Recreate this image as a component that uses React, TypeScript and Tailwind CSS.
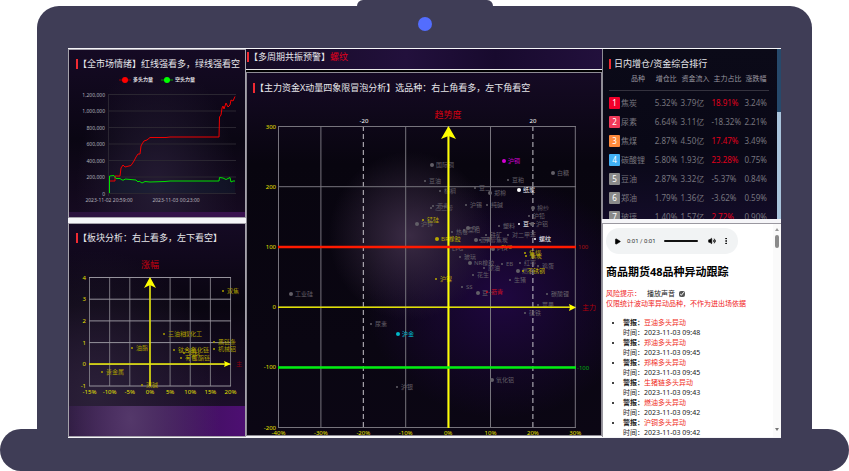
import type { ReactNode } from 'react';
import { Play, Volume2, EllipsisVertical } from 'lucide-react';

type Point = { x: number; y: number; name: string; r?: number; color?: string };

const GRAY = '#625f67';
const YELLOW = '#b8a800';

const ranking = [
  { name: '焦炭', badge: 'bg-[#f4002b]', add: '5.32%', flow: '3.79亿', main: '18.91%', change: '3.24%' },
  { name: '尿素', badge: 'bg-[#f03a5a]', add: '6.64%', flow: '3.11亿', main: '-18.32%', change: '2.21%' },
  { name: '焦煤', badge: 'bg-[#ff8a3c]', add: '2.87%', flow: '4.50亿', main: '17.47%', change: '3.49%' },
  { name: '碳酸锂', badge: 'bg-[#41b0f5]', add: '5.80%', flow: '1.93亿', main: '23.28%', change: '0.75%' },
  { name: '豆油', badge: 'bg-[#8a8a8a]', add: '2.87%', flow: '3.32亿', main: '-5.37%', change: '0.84%' },
  { name: '郑油', badge: 'bg-[#8a8a8a]', add: '1.79%', flow: '1.36亿', main: '-3.62%', change: '0.59%' },
  { name: '玻璃', badge: 'bg-[#8a8a8a]', add: '1.40%', flow: '1.57亿', main: '2.72%', change: '0.90%' },
];

const alerts = [
  { text: '豆油多头异动', time: '2023-11-03 09:48' },
  { text: '郑油多头异动', time: '2023-11-03 09:45' },
  { text: '郑棉多头异动', time: '2023-11-03 09:45' },
  { text: '生猪链多头异动', time: '2023-11-03 09:43' },
  { text: '燃油多头异动', time: '2023-11-03 09:42' },
  { text: '沪铜多头异动', time: '2023-11-03 09:42' },
];

const sectorPoints: Point[] = [
  { x: 223, y: 291, name: '双焦' },
  { x: 164, y: 334, name: '三油粕' },
  { x: 180, y: 334, name: '煤化工', r: 0 },
  { x: 132, y: 348, name: '油脂' },
  { x: 174, y: 350, name: '钛合金' },
  { x: 187, y: 350, name: '氧化链' },
  { x: 184, y: 353, name: '饲料' },
  { x: 181, y: 358, name: '有色' },
  { x: 188, y: 358, name: '聚酯链' },
  { x: 214, y: 342, name: '黑链条' },
  { x: 214, y: 349, name: '机械铝' },
  { x: 102, y: 372, name: '贵金属' },
  { x: 142, y: 385, name: '双碱' },
];

const bubblePoints: Point[] = [
  { x: 432, y: 165, name: '国际铜', r: 2 },
  { x: 425, y: 181, name: '豆油' },
  { x: 440, y: 191, name: '棕榈' },
  { x: 475, y: 188, name: '豆二' },
  { x: 490, y: 193, name: '郑棉', r: 2 },
  { x: 508, y: 180, name: '豆粕' },
  { x: 519, y: 190, name: '纸浆', r: 2, color: '#ffffff' },
  { x: 553, y: 173, name: '白糖', r: 2 },
  { x: 504, y: 161, name: '沪铜', r: 2, color: '#d400d4' },
  { x: 466, y: 205, name: '沪锡' },
  { x: 487, y: 205, name: '纯碱' },
  { x: 533, y: 208, name: '棉纱', r: 2 },
  { x: 529, y: 216, name: '沪铅' },
  { x: 433, y: 206, name: '沥青' },
  { x: 431, y: 208, name: '乙二醇' },
  { x: 423, y: 220, name: '锰硅', color: YELLOW },
  { x: 417, y: 224, name: '沪锌', r: 2 },
  { x: 499, y: 226, name: '塑料' },
  { x: 519, y: 224, name: '豆一', color: '#ffffff' },
  { x: 532, y: 224, name: '沪铝', r: 2 },
  { x: 452, y: 232, name: '热卷' },
  { x: 468, y: 228, name: 'PP', r: 2 },
  { x: 464, y: 230, name: '菜粕' },
  { x: 486, y: 235, name: '铁矿' },
  { x: 508, y: 235, name: '对二甲苯' },
  { x: 437, y: 239, name: 'BR橡胶', r: 2, color: YELLOW },
  { x: 476, y: 240, name: '沥青', r: 2 },
  { x: 480, y: 240, name: '甲醇焦炭' },
  { x: 535, y: 239, name: '螺纹', color: '#ffffff' },
  { x: 497, y: 247, name: 'PVC', color: YELLOW },
  { x: 493, y: 249, name: 'PTA', r: 2 },
  { x: 448, y: 249, name: 'LPG' },
  { x: 460, y: 257, name: '玻璃' },
  { x: 470, y: 263, name: 'NR橡胶', r: 2 },
  { x: 502, y: 264, name: 'EB' },
  { x: 484, y: 268, name: '原油' },
  { x: 473, y: 275, name: '花生' },
  { x: 510, y: 280, name: '生猪' },
  { x: 520, y: 263, name: '红枣' },
  { x: 538, y: 266, name: '鸡蛋' },
  { x: 525, y: 253, name: '焦煤', color: YELLOW },
  { x: 526, y: 256, name: '焦炭', color: YELLOW },
  { x: 518, y: 271, name: '燃油', r: 2 },
  { x: 523, y: 271, name: '不锈钢', color: YELLOW },
  { x: 436, y: 279, name: '沪镍', color: YELLOW },
  { x: 462, y: 287, name: 'SS' },
  { x: 478, y: 293, name: '豆一', r: 2 },
  { x: 487, y: 292, name: '沥青', color: '#d01020' },
  { x: 547, y: 294, name: '碳酸锂' },
  { x: 538, y: 305, name: '苹果' },
  { x: 525, y: 313, name: '硅铁' },
  { x: 291, y: 294, name: '工业硅', r: 2 },
  { x: 371, y: 324, name: '尿素' },
  { x: 398, y: 334, name: '沪金', r: 2, color: '#00b8c8' },
  { x: 397, y: 387, name: '沪银' },
  { x: 492, y: 380, name: '氧化铝', r: 2 },
];

function PanelTitle({ children }: { children: ReactNode }) {
  return (
    <h2 className="flex items-center text-[9px] leading-[11px] whitespace-nowrap text-[#e6e6ea]">
      <span className="h-[10px] w-[2px] shrink-0 bg-[#f02a32]" />
      {children}
    </h2>
  );
}

function Points({ data, color }: { data: Point[]; color: string }) {
  return (
    <g fontSize={6}>
      {data.map((p, idx) => (
        <g key={idx} fill={p.color ?? color}>
          <circle cx={p.x} cy={p.y} r={p.r ?? 1} />
          <text x={p.x + 4} y={p.y + 2}>
            {p.name}
          </text>
        </g>
      ))}
    </g>
  );
}

function MoodChart() {
  const ticks = ['1,200,000', '1,000,000', '800,000', '600,000', '400,000', '200,000', '0'];
  return (
    <svg viewBox="69 84 176 128" className="block w-full">
      <g fontSize={5} fill="#b4b1ba" textAnchor="end">
        {ticks.map((label, idx) => (
          <g key={label}>
            <path d={`M109 ${94.5 + idx * 16.5}H236`} stroke="#2a2631" />
            <text x={105} y={96.5 + idx * 16.5}>
              {label}
            </text>
          </g>
        ))}
      </g>
      <path d="M108.5 94V196" stroke="#2a2631" />
      <g fontSize={5} fill="#b4b1ba" textAnchor="middle">
        <text x={109} y={202}>2023-11-02 20:59:00</text>
        <text x={176} y={202}>2023-11-03 00:23:00</text>
      </g>
      <path
        d="M109 193V176L114 175.500L116 178H120L122 180H136L138 182L142 183L145 181.500L150 182L165 181H219L220 177.500L223 178L226 179.500L230 177.500L231 182L233 181H235V193Z"
        fill="#0b2a3a"
        opacity={0.25}
      />
      <path
        d="M109 181H115V176H120L121 168L123 165L125 167L131 165.500L134 161L136 157L138 154H140L141 146L142 144L144 141L147 140L150 137.500H166L170 137H219L219.500 117L221 115L222 108L223 106L224 109L226 103L228 107L230 105L231 100L233 101L235 96.500"
        fill="none"
        stroke="#f00000"
      />
      <path
        d="M109.500 193V176L114 175.500L116 178.500H120L122 180H124L125 179L136 180L138 182L139 181L142 183L145 181.500L150 182L165 181.500L170 181H219L219.500 177.500L223 178L226 179.500L229 178L230 177.500L231 182L233 181H235"
        fill="none"
        stroke="#00e000"
      />
    </svg>
  );
}

function SectorChart() {
  const cols = ['-15%', '-10%', '-5%', '0%', '5%', '10%', '15%', '20%'];
  const rows = ['4', '3', '2', '1', '0', '-1'];
  return (
    <svg viewBox="69 243 176 163" className="block w-full">
      <text x={150} y={268} fontSize={9} fill="#c8000f" textAnchor="middle">涨幅</text>
      <g fontSize={6} fill="#e8e000">
        {cols.map((label, idx) => (
          <g key={label} textAnchor="middle">
            <path d={`M${89.5 + idx * 20.15} 277V386`} stroke="#77747d" />
            <text x={89.5 + idx * 20.15} y={394}>{label}</text>
          </g>
        ))}
        {rows.map((label, idx) => (
          <g key={label} textAnchor="end">
            <path d={`M89 ${277.5 + idx * 21.7}H231`} stroke="#96939c" />
            <text x={86} y={279.5 + idx * 21.7}>{label}</text>
          </g>
        ))}
      </g>
      <Points data={sectorPoints} color="#a89c00" />
      <path d="M150 386V284M89 364H226" stroke="#e8e800" strokeWidth={1.5} />
      <path d="M150 277L156 288L150 285L144 288ZM231 364L224 367L225 364L224 361Z" fill="#ffff00" />
      <text x={236} y={366} fontSize={6} fill="#8c0010">主</text>
    </svg>
  );
}

function BubbleChart() {
  const cols = ['-40%', '-30%', '-20%', '-10%', '0%', '10%', '20%', '30%'];
  const rows = ['300', '200', '100', '0', '-100', '-200'];
  return (
    <svg viewBox="247 93 354 342" className="block w-full">
      <text x={448} y={118} fontSize={9} fill="#d40010" textAnchor="middle">趋势度</text>
      <g fontSize={6} fill="#e8e000">
        {cols.map((label, idx) => (
          <g key={label} textAnchor="middle">
            <path
              d={`M${278.5 + idx * 42.4} 126V428`}
              stroke={idx === 2 || idx === 6 ? '#c8c5cc' : '#77747d'}
              strokeDasharray={idx === 2 || idx === 6 ? '5 3' : undefined}
            />
            <text x={278.5 + idx * 42.4} y={435}>{label}</text>
          </g>
        ))}
        {rows.map((label, idx) => (
          <g key={label} textAnchor="end">
            <path d={`M278 ${126.5 + idx * 60.2}H576`} stroke="#77747d" />
            <text x={276} y={128.5 + idx * 60.2}>{label}</text>
          </g>
        ))}
      </g>
      <g fontSize={6} fill="#ffffff" textAnchor="middle">
        <text x={364} y={123}>-20</text>
        <text x={533} y={123}>20</text>
      </g>
      <Points data={bubblePoints} color={GRAY} />
      <path d="M278 307.200H570" stroke="#e0e000" strokeWidth={1.5} />
      <path d="M448.500 428V134" stroke="#ffff00" strokeWidth={2} />
      <path d="M278 247H576" stroke="#ff1a00" strokeWidth={2.5} />
      <path d="M278 367.500H576" stroke="#00f010" strokeWidth={2.5} />
      <path d="M448.500 126L456 139L448.500 136L441 139ZM576 307.500L569 311L570 307.500L569 304Z" fill="#ffff00" />
      <g fontSize={6}>
        <text x={578} y={249} fill="#b01010">100</text>
        <text x={577} y={370} fill="#00b010">-100</text>
        <text x={582} y={310} fontSize={7} fill="#b0000c">主力</text>
      </g>
    </svg>
  );
}

function RankingPanel() {
  return (
    <section className="flex h-[170px] overflow-hidden border-l border-[#8f8c95] bg-[linear-gradient(#0b0a18,#090816_60%,#130c28)]">
      <div className="min-w-0 flex-1 pt-[9px] pr-[8px] pl-[6px]">
        <PanelTitle>
          <span className="pl-[3px]">日内增仓/资金综合排行</span>
        </PanelTitle>
        <table className="w-full table-fixed text-left text-[8px] leading-[12px] whitespace-nowrap text-[#77757e]">
          <thead className="text-[7px] text-[#9a98a0]">
            <tr className="h-[21px] border-b border-[#34323e]">
              <th className="w-[28%] pl-[22px] font-normal">品种</th>
              <th className="w-[16%] pl-[2px] font-normal">增仓比</th>
              <th className="w-[20%] pl-[2px] font-normal">资金流入</th>
              <th className="w-[20%] pl-[2px] font-normal">主力占比</th>
              <th className="w-[16%] pl-[2px] font-normal">涨跌幅</th>
            </tr>
          </thead>
          <tbody className="before:block before:h-[3px]">
            {ranking.map((row, idx) => (
              <tr key={row.name} className="h-[19px]">
                <td>
                  <div className="flex items-center gap-[1px]">
                    <span className={`h-[12px] w-[11px] rounded-[1px] text-center text-white ${row.badge}`}>{idx + 1}</span>
                    {row.name}
                  </div>
                </td>
                <td className="pl-[1px]">{row.add}</td>
                <td className="pl-[1px]">{row.flow}</td>
                <td className={row.main.startsWith('-') ? '' : 'text-[#e0001c]'}>{row.main}</td>
                <td className="pl-[1px]">{row.change}</td>
              </tr>
            ))}
          </tbody>
        </table>
      </div>
      <div className="w-[4px] bg-[#a9c4dc]">
        <div className="h-[63px] bg-[#26496b]" />
      </div>
    </section>
  );
}

function AlertPanel() {
  return (
    <section className="flex h-[214px] overflow-hidden border-t border-l border-[#9a98a0] bg-white text-[7px] leading-[10px] text-[#222]">
      <div className="min-w-0 flex-1 pt-[4px] pl-[3px]">
        <div className="flex h-[26px] w-[132px] items-center rounded-full bg-[#f1f3f4] pl-[8px] text-black">
          <button aria-label="播放">
            <Play size={7} fill="currentColor" />
          </button>
          <span className="w-[37px] pl-[6px] font-['Roboto',sans-serif] text-[6px] whitespace-nowrap text-[#333]">0:01 / 0:01</span>
          <input
            type="range"
            aria-label="进度"
            defaultValue={100}
            className="ml-[6px] h-[2px] w-[34px] appearance-none rounded-full bg-[#111] [&::-webkit-slider-thumb]:w-0 [&::-webkit-slider-thumb]:appearance-none"
          />
          <button aria-label="音量" className="ml-[10px]">
            <Volume2 size={8} fill="currentColor" />
          </button>
          <button aria-label="更多" className="ml-[6px]">
            <EllipsisVertical size={8} strokeWidth={3} />
          </button>
        </div>
        <h1 className="mt-[10px] text-[11px] leading-[16px] font-bold whitespace-nowrap text-black">商品期货48品种异动跟踪</h1>
        <div className="mt-[9px] flex items-center">
          <span className="text-[#f02020]">风险提示：</span>
          <label htmlFor="sound" className="ml-[6px]">播放声音</label>
          <input
            id="sound"
            type="checkbox"
            defaultChecked
            className="ml-[4px] size-[6px] accent-[#555]"
          />
        </div>
        <p className="whitespace-nowrap text-[#f02020]">仅限统计波动率异动品种，不作为进出场依据</p>
        <ul className="mt-[9px] list-disc pl-[17px]">
          {alerts.map((alert) => (
            <li key={alert.text} className="marker:text-black">
              <b>警报：</b>
              <span className="text-[#f02a20]">{alert.text}</span>
              <br />
              时间：{alert.time}
            </li>
          ))}
        </ul>
      </div>
      <div className="flex w-[8px] flex-col items-center justify-between bg-[#fafafa] py-[4px]">
        <div className="flex flex-col items-center gap-[4px]">
          <span className="border-x-2 border-b-3 border-x-transparent border-b-[#999]" />
          <span className="h-[13px] w-[4px] rounded-full bg-[#8b8b8b]" />
        </div>
        <span className="mb-[2px] border-x-2 border-t-3 border-x-transparent border-t-[#777]" />
      </div>
    </section>
  );
}

export default function App() {
  return (
    <div className="flex flex-col items-center bg-white font-['Noto_Sans','Noto_Sans_CJK_SC',sans-serif]">
      {/* Laptop lid */}
      <div className="h-[6px] w-[136px] rounded-t-[6px] bg-[#3f3d56]" />
      <div className="w-full px-[37px]">
        <div className="rounded-t-[22px] bg-[#3f3d56] px-[31px]">
          <div className="flex h-[42px] justify-center pt-[11px]">
            <span className="size-[14px] rounded-full bg-[#536dfe]" />
          </div>

          {/* Screen */}
          <div className="relative z-10 grid grid-cols-[178fr_356fr_179fr] items-start bg-[#f5f5f8] py-[1px]">
            <div className="flex min-w-0 flex-col gap-[5px]">
              <section className="overflow-hidden border border-[#a5a2ab] bg-[linear-gradient(90deg,#2a123c,#3a1250)]">
                <div className="bg-[radial-gradient(ellipse_at_50%_85%,#241b33,transparent_65%),linear-gradient(#150a24,#0a0613_55%,#150a20)] pt-[8px]">
                  <div className="pl-[7px]">
                    <PanelTitle>【全市场情绪】红线强看多，绿线强看空</PanelTitle>
                  </div>
                  <div className="flex h-[15px] items-center justify-center gap-[8px] pt-[6px] text-[5px] leading-[9px] font-bold text-[#e0e0e4]">
                    <span className="flex items-center gap-[2px]">
                      <svg viewBox="0 0 12 6" className="h-[6px] w-[12px]">
                        <path d="M0 3H12" stroke="#a00000" />
                        <circle cx={6} cy={3} r={3} fill="#f00" />
                      </svg>
                      多头力量
                    </span>
                    <span className="flex items-center gap-[2px]">
                      <svg viewBox="0 0 12 6" className="h-[6px] w-[12px]">
                        <path d="M0 3H12" stroke="#00a000" />
                        <circle cx={6} cy={3} r={3} fill="#0f0" />
                      </svg>
                      空头力量
                    </span>
                  </div>
                  <MoodChart />
                </div>
                <div className="h-[5px]" />
              </section>

              <section className="overflow-hidden border border-[#a5a2ab] bg-[radial-gradient(ellipse_at_35%_92%,#54386a,transparent_55%),linear-gradient(90deg,#231334,#4d0f72)]">
                <div className="bg-[radial-gradient(ellipse_at_15%_95%,#2b2038,transparent_60%),linear-gradient(#150a24,#090510_45%,#1c0e2a)] pt-[8px]">
                  <div className="pl-[7px]">
                    <PanelTitle>【板块分析：右上看多，左下看空】</PanelTitle>
                  </div>
                  <SectorChart />
                </div>
                <div className="h-[30px]" />
              </section>
            </div>

            <div className="flex min-w-0 flex-col gap-[2px] bg-black">
              <section className="border-b border-[#e8e8e8] bg-[linear-gradient(90deg,#140a22,#22103c_45%,#180a2e_70%,#22103c)] pt-[2px] pb-[7px] pl-[1px]">
                <PanelTitle>
                  <span>
                    【多周期共振预警】<span className="text-[#e0001c]">螺纹</span>
                  </span>
                </PanelTitle>
              </section>
              <section className="overflow-hidden border border-[#8f8c95] bg-[radial-gradient(ellipse_at_46%_45%,#3a2b44,transparent_30%),radial-gradient(ellipse_at_72%_62%,#1f0740,transparent_38%),linear-gradient(#150a24,#08050f_25%,#0a0612_75%,#0b0614)] pt-[9px]">
                <div className="pl-[6px]">
                  <PanelTitle>【主力资金X动量四象限冒泡分析】选品种：右上角看多，左下角看空</PanelTitle>
                </div>
                <BubbleChart />
              </section>
            </div>

            <div className="flex min-w-0 flex-col gap-[4px]">
              <RankingPanel />
              <AlertPanel />
            </div>
          </div>
        </div>
      </div>

      {/* Laptop base, tucked under the bottom edge of the screen */}
      <div className="-mt-[9px] h-[42px] w-full rounded-[26px] bg-[#3f3d56]" />
    </div>
  );
}
